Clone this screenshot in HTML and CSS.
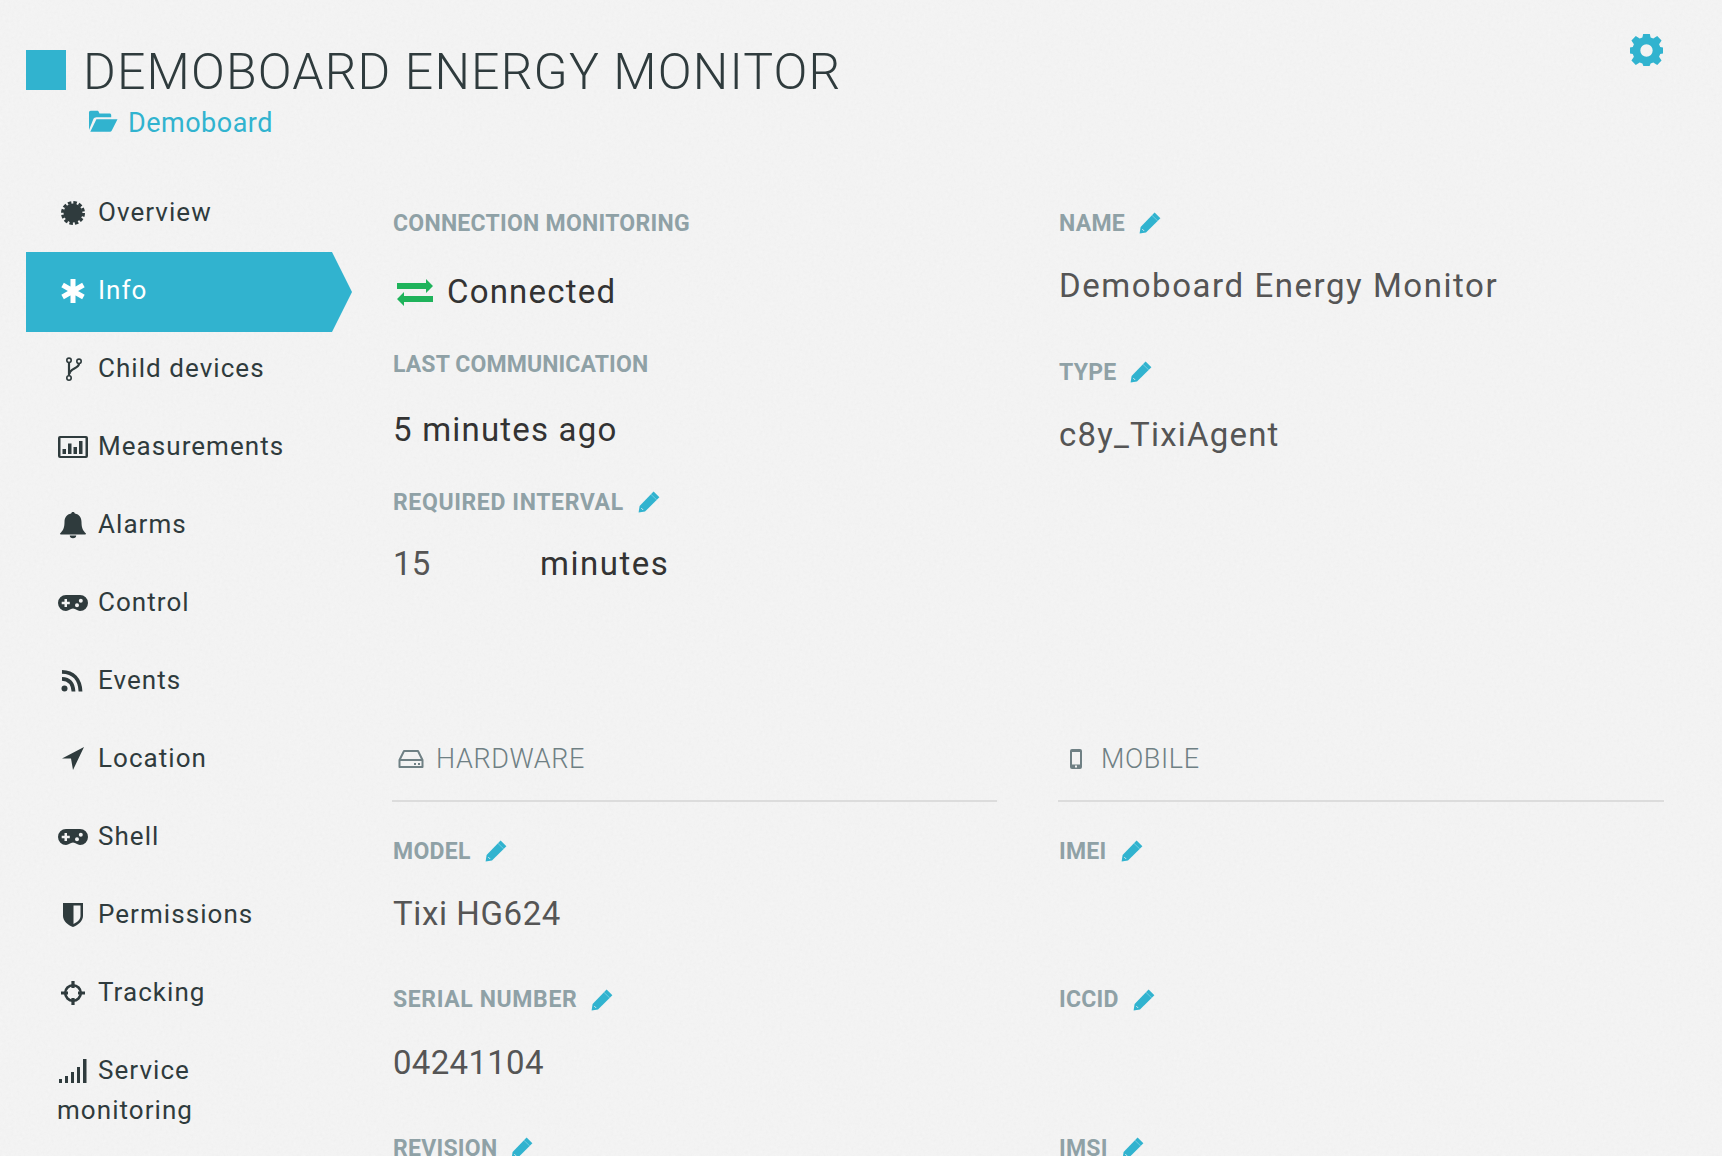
FILE: index.html
```html
<!DOCTYPE html>
<html lang="en">
	<head>
		<meta charset="UTF-8">
		<title>Demoboard Energy Monitor</title>
		<link rel="stylesheet" href="styles.css">
	</head>
	<body>
		<svg class="sprite" width="0" height="0">
			<symbol id="pencil" viewBox="0 0 22 22">
				<path d="M15.6 .6 21.4 6.2 7 20.6 .6 21.6 1.6 15Z"/>
				<path d="M13 3.4 18.8 9" fill="none" stroke="#8fd6e6" stroke-width=".7"/>
				<path d="M3.4 17.2 5 18.8" fill="none" stroke="#f2f2f2" stroke-width="1"/>
			</symbol>
			<symbol id="gamepad" viewBox="0 0 30 16">
				<path fill-rule="evenodd" d="M8 0H22A8 8 0 0 1 22 16C19 16 18 13.500 15 13.500S11 16 8 16A8 8 0 0 1 8 0ZM6.500 4V6.800H3.700V9.200H6.500V12H9V9.200H11.800V6.800H9V4ZM22.800 3.800A2 2 0 1 0 22.800 7.800 2 2 0 0 0 22.800 3.800ZM19 8.300A2 2 0 1 0 19 12.300 2 2 0 0 0 19 8.300Z"/>
			</symbol>
		</svg>

		<header class="head">
			<span class="head-mark"></span>
			<div class="head-text">
				<h1 class="head-title">DEMOBOARD ENERGY MONITOR</h1>
				<a class="head-group">
					<svg class="folder" viewBox="0 0 30 22"><path d="M1 20V2.500C1 1.500 1.700 .8 2.700 .8H9C10 .8 10.500 1.300 10.900 2.200L11.500 3.500H21.500C22.500 3.500 23.200 4.200 23.200 5.200V7.300H8.500C7 7.300 6 8 5.300 9.200Z"/><path d="M8.400 9.200H29.500L23.800 20.500C23.400 21.300 22.800 21.700 21.900 21.700H2.300Z"/></svg>
					Demoboard
				</a>
			</div>
			<svg class="gear" viewBox="0 0 32 32"><path fill-rule="evenodd" d="M13 0H19L20 4.300 22.600 5.400 26.400 3 30.600 7.300 28.200 11 29.300 13.700 32 14V20L29.300 20.300 28.200 23 30.600 26.700 26.400 31 22.600 28.600 20 29.700 19 32H13L12 29.700 9.400 28.600 5.600 31 1.400 26.700 3.800 23 2.700 20.300 0 20V14L2.700 13.700 3.800 11 1.400 7.300 5.600 3 9.400 5.400 12 4.300ZM16 11A6 6 0 1 0 16 23 6 6 0 0 0 16 11Z" transform="translate(0 -1)"/></svg>
		</header>

		<div class="layout">
			<nav class="side">
				<a class="side-item">
					<svg class="side-icon" viewBox="0 0 32 24"><circle cx="16" cy="12" r="9.500"/><circle cx="16" cy="12" r="10.500" fill="none" stroke="#2f3b3d" stroke-width="3" stroke-dasharray="3.500 2"/></svg>Overview
				</a>
				<a class="side-item active">
					<svg class="side-icon" viewBox="0 0 32 24"><path d="M16 0V24M5.600 6 26.400 18M26.400 6 5.600 18" fill="none" stroke="#fff" stroke-width="5"/></svg>Info
				</a>
				<a class="side-item">
					<svg class="side-icon" viewBox="0 0 32 24"><g fill="none" stroke="#2f3b3d"><circle cx="12" cy="3.300" r="2.200" stroke-width="1.600"/><circle cx="22" cy="4.300" r="2.200" stroke-width="1.600"/><circle cx="12" cy="21" r="2.200" stroke-width="1.600"/><path d="M12 5.500V18.800M22 6.500C22 12 12.500 11 12.500 17" stroke-width="2.200"/></g></svg>Child devices
				</a>
				<a class="side-item">
					<svg class="side-icon" viewBox="0 0 32 24"><path fill-rule="evenodd" d="M3 1H29A2 2 0 0 1 31 3V21A2 2 0 0 1 29 23H3A2 2 0 0 1 1 21V3A2 2 0 0 1 3 1ZM3.500 3V21H28.500V3ZM5.500 14H9V19H5.500ZM11 8.500H14.500V19H11ZM16.500 12H20V19H16.500ZM22 6H25.500V19H22Z"/></svg>Measurements
				</a>
				<a class="side-item">
					<svg class="side-icon" viewBox="0 0 32 24"><path d="M16 -1C17 -1 17.800 -.3 17.800 .6 22.500 1.400 24.500 5 24.500 9 24.500 15 26 17.500 29 20.500 29 21 28.500 21.500 28 21.500H4C3.500 21.500 3 21 3 20.500 6 17.500 7.500 15 7.500 9 7.500 5 9.500 1.400 14.200 .6 14.200 -.3 15 -1 16 -1ZM12.800 22.500H19.200A3.200 2.800 0 0 1 12.800 22.500Z"/></svg>Alarms
				</a>
				<a class="side-item">
					<svg class="side-icon" viewBox="0 0 32 24"><use href="#gamepad" x="1" y="4" width="30" height="16"/></svg>Control
				</a>
				<a class="side-item">
					<svg class="side-icon" viewBox="0 0 32 24"><circle cx="7.500" cy="19.500" r="3"/><path d="M5 9.800C12 10 16 14 16.500 22.500M5 2.800C16 3 23 10 23.500 22.500" fill="none" stroke="#2f3b3d" stroke-width="3.800"/></svg>Events
				</a>
				<a class="side-item">
					<svg class="side-icon" viewBox="0 0 32 24"><path d="M27 0 16 23 14 11.500 5 11.500Z"/></svg>Location
				</a>
				<a class="side-item">
					<svg class="side-icon" viewBox="0 0 32 24"><use href="#gamepad" x="1" y="4" width="30" height="16"/></svg>Shell
				</a>
				<a class="side-item">
					<svg class="side-icon" viewBox="0 0 32 24"><path fill-rule="evenodd" d="M6 0H26V13C26 18 21 22 16 24 11 22 6 18 6 13ZM16.500 2.500V21C20 19.500 23.500 16.500 23.500 13V2.500Z"/></svg>Permissions
				</a>
				<a class="side-item">
					<svg class="side-icon" viewBox="0 0 32 24"><circle cx="16" cy="12" r="7.800" fill="none" stroke="#2f3b3d" stroke-width="2.600"/><path d="M16 0V7M16 17V24M4 12H11M21 12H28" stroke="#2f3b3d" stroke-width="3.200"/></svg>Tracking
				</a>
				<a class="side-item">
					<svg class="side-icon" viewBox="0 0 32 24"><path d="M2 20H5V24H2ZM8 17H11V24H8ZM14 13H17V24H14ZM20 8H23V24H20ZM26 0H29.500V24H26Z"/></svg>Service<br>monitoring
				</a>
			</nav>

			<main class="main">
				<div class="grid">
					<section class="col">
						<div class="label">CONNECTION MONITORING</div>
						<div class="value status">
							<svg class="arrows" viewBox="0 0 36 27"><path d="M0 4H29V0L36 7 29 14V10H0Z"/><path d="M36 17H7V13L0 20 7 27V23H36Z"/></svg>
							Connected
						</div>
						<div class="label lead label-narrow">LAST COMMUNICATION</div>
						<div class="value dark after-lead">5 minutes ago</div>
						<div class="label lead label-wide">REQUIRED INTERVAL<svg class="edit"><use href="#pencil"/></svg></div>
						<div class="value interval"><span class="interval-num digits">15</span><span class="dark interval-unit">minutes</span></div>
					</section>
					<section class="col">
						<div class="label">NAME<svg class="edit"><use href="#pencil"/></svg></div>
						<div class="value wide">Demoboard Energy Monitor</div>
						<div class="label next">TYPE<svg class="edit"><use href="#pencil"/></svg></div>
						<div class="value">c8y_TixiAgent</div>
					</section>
				</div>

				<div class="grid lower">
					<section class="col">
						<h2 class="section-title">
							<svg class="drive" viewBox="0 0 26 20"><path d="M6 2H20L24.500 11V18H1.500V11ZM1.500 11H24.500" fill="none" stroke="#6f8084" stroke-width="2" stroke-linejoin="round"/><path d="M16 14H18V16H16ZM20 14H22V16H20Z" fill="#6f8084"/></svg>HARDWARE
						</h2>
						<div class="label">MODEL<svg class="edit"><use href="#pencil"/></svg></div>
						<div class="value tight">Tixi HG624</div>
						<div class="label next label-wide">SERIAL NUMBER<svg class="edit"><use href="#pencil"/></svg></div>
						<div class="value digits">04241104</div>
						<div class="label next">REVISION<svg class="edit"><use href="#pencil"/></svg></div>
					</section>
					<section class="col">
						<h2 class="section-title">
							<svg class="phone" viewBox="0 0 12 20"><path fill-rule="evenodd" d="M2 0H10A2 2 0 0 1 12 2V18A2 2 0 0 1 10 20H2A2 2 0 0 1 0 18V2A2 2 0 0 1 2 0ZM2 3V15.500H10V3ZM5 16.500H7V18.500H5Z" fill="#6f8084"/></svg>MOBILE
						</h2>
						<div class="label">IMEI<svg class="edit"><use href="#pencil"/></svg></div>
						<div class="value"></div>
						<div class="label next">ICCID<svg class="edit"><use href="#pencil"/></svg></div>
						<div class="value"></div>
						<div class="label next">IMSI<svg class="edit"><use href="#pencil"/></svg></div>
					</section>
				</div>
			</main>
		</div>
	</body>
</html>
```

FILE: styles.css
```css
html,body{
	height:100%;
	overflow:hidden;
}
body{
	margin:0;
	background-color:#f6f6f6;
	background-image:url("data:image/svg+xml,%3Csvg xmlns='http://www.w3.org/2000/svg' width='300' height='300'%3E%3Cfilter id='n'%3E%3CfeTurbulence type='fractalNoise' baseFrequency='.35' numOctaves='2' stitchTiles='stitch'/%3E%3CfeColorMatrix values='0 0 0 0 .5 0 0 0 0 .5 0 0 0 0 .5 0 0 0 .12 0'/%3E%3C/filter%3E%3Crect width='300' height='300' filter='url(%23n)'/%3E%3C/svg%3E");
	font-family:"Roboto","Liberation Sans",sans-serif;
	color:#2f3b3d;
}
.sprite{
	position:absolute;
}

/* header */
.head{
	display:flex;
	height:173px;
	padding:45px 58px 0 26px;
	box-sizing:border-box;
}
.head-mark{
	width:40px;
	height:40px;
	margin-top:5px;
	background:#31b3cf;
}
.head-text{
	margin-left:17px;
}
.head-title{
	margin:0;
	font-size:50px;
	font-weight:300;
	line-height:54px;
	letter-spacing:1.150px;
	color:#2f3b3d;
}
.head-group{
	display:flex;
	align-items:center;
	gap:10px;
	margin:4px 0 0 5px;
	font-size:27px;
	line-height:40px;
	letter-spacing:.5px;
	color:#31b3cf;
}
.folder{
	width:30px;
	height:22px;
	margin-top:-4px;
	fill:#31b3cf;
}
.gear{
	width:33px;
	height:33px;
	margin:-11px 1px 0 auto;
	fill:#31b3cf;
}

/* left menu */
.layout{
	display:flex;
}
.side{
	flex:none;
	width:326px;
	margin-left:26px;
}
.side-item{
	display:block;
	padding:19px 10px 19px 31px;
	font-size:26px;
	line-height:40px;
	letter-spacing:1.050px;
	color:#2f3b3d;
}
.side-icon{
	display:inline-block;
	width:32px;
	height:24px;
	margin-right:9px;
	vertical-align:-4px;
	fill:#2f3b3d;
	overflow:visible;
}
.side-item.active{
	margin:1px 0 -3px;
	padding:18px 10px 22px 31px;
	background:#31b3cf;
	color:#fff;
	clip-path:polygon(0 0,306px 0,100% 50%,306px 100%,0 100%);
}

/* right side */
.main{
	flex:none;
	width:1272px;
	margin:36px 0 0 40px;
}
.grid{
	display:grid;
	grid-template-columns:605px 606px;
	column-gap:61px;
}
.lower{
	margin-top:149px;
}
.col{
	padding-left:1px;
}
.label{
	display:flex;
	align-items:center;
	height:28px;
	font-size:23px;
	font-weight:700;
	letter-spacing:.25px;
	color:#8fa1a6;
}
.label-wide{
	letter-spacing:.62px;
}
.label-narrow{
	letter-spacing:.12px;
}
.edit{
	width:22px;
	height:22px;
	margin-left:14px;
	fill:#31b3cf;
}
.value{
	height:48px;
	margin-top:25px;
	font-size:33px;
	line-height:48px;
	letter-spacing:1.2px;
	color:#555;
}
.wide{
	letter-spacing:1.550px;
}
.tight{
	letter-spacing:.6px;
}
.digits{
	letter-spacing:.3px;
}
.dark{
	color:#333;
}
.next{
	margin-top:48px;
}
.lower .next{
	margin-top:47.5px;
}
.lead{
	margin-top:34px;
}
.after-lead{
	margin-top:28px;
}
.status{
	display:flex;
	align-items:center;
	gap:14px;
	margin-left:4px;
	margin-top:31px;
	color:#333;
}
.arrows{
	width:36px;
	height:27px;
	fill:#1fb35b;
}
.interval{
	display:flex;
	margin-top:24px;
}
.interval-num{
	width:147px;
}
.interval-unit{
	letter-spacing:1.5px;
}
.section-title{
	display:flex;
	align-items:center;
	height:44px;
	margin:0 0 35px -1px;
	padding:0 0 19px 6px;
	border-bottom:2px solid #dcdcdc;
	font-size:27px;
	font-weight:300;
	letter-spacing:.6px;
	color:#6f8084;
}
.drive{
	width:26px;
	height:20px;
	margin-right:12px;
}
.phone{
	width:12px;
	height:20px;
	margin:0 19px 0 6px;
}
```
